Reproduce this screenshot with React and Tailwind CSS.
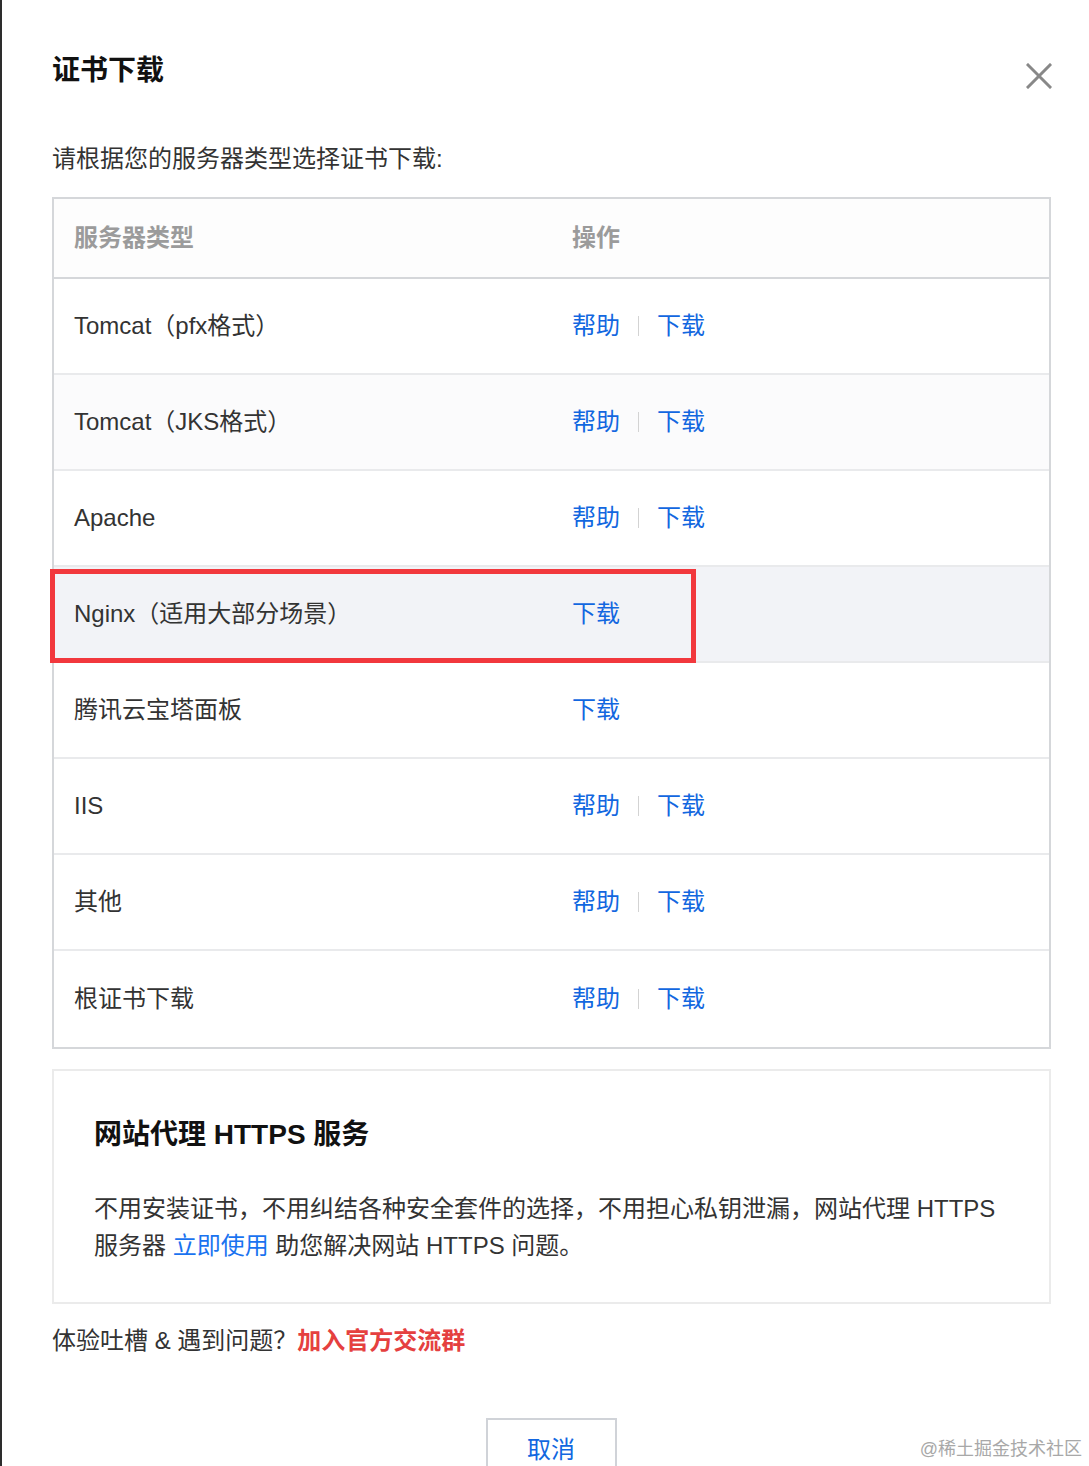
import React from "react";

const FONT = { fontFamily: '"Liberation Sans", "Noto Sans CJK SC", sans-serif' };

const rows = [
  { name: "Tomcat（pfx格式）", help: true, bg: "bg-white" },
  { name: "Tomcat（JKS格式）", help: true, bg: "bg-[#fbfbfc]" },
  { name: "Apache", help: true, bg: "bg-white" },
  { name: "Nginx（适用大部分场景）", help: false, bg: "bg-[#f2f3f7]", highlight: true },
  { name: "腾讯云宝塔面板", help: false, bg: "bg-white" },
  { name: "IIS", help: true, bg: "bg-white" },
  { name: "其他", help: true, bg: "bg-white" },
  { name: "根证书下载", help: true, bg: "bg-white" },
];

function Row({ row, last }) {
  return (
    <div
      className={`relative flex items-center h-[96px] pl-[20px] ${row.bg} ${
        last ? "" : "border-b-2 border-[#e9eaec]"
      }`}
    >
      <div className="w-[498px] text-[24px] leading-[32px] text-[#333]">{row.name}</div>
      <div className="flex items-center text-[24px] leading-[32px] text-[#1267e0]">
        {row.help ? (
          <>
            <span>帮助</span>
            <span className="mx-[18px] w-px h-[20px] bg-[#d3d3d3]" />
            <span>下载</span>
          </>
        ) : (
          <span>下载</span>
        )}
      </div>
      {row.highlight && (
        <div className="absolute left-[-4px] top-[2px] bottom-[-2px] w-[646px] border-[5px] border-[#f2383d] pointer-events-none" />
      )}
    </div>
  );
}

export default function App() {
  return (
    <div className="relative flex h-[1466px] overflow-hidden bg-white" style={FONT}>
      <div className="w-[2px] shrink-0 bg-[#2d2d2d]" />
      <div className="flex-1 pl-[50px] pr-[38px]">
        <div className="flex items-start justify-between h-[30px] mt-[56px]">
          <div className="text-[28px] leading-[30px] font-bold text-[#111]">证书下载</div>
          <svg width="26" height="26" viewBox="0 0 26 26" className="mt-[7px] mr-[-1px] shrink-0">
            <path d="M2 2 L24 24 M24 2 L2 24" stroke="#888" strokeWidth="3" strokeLinecap="square" />
          </svg>
        </div>

        <div className="mt-[57px] text-[24px] leading-[32px] text-[#333]">
          请根据您的服务器类型选择证书下载:
        </div>

        <div className="mt-[22px] border-2 border-[#d5d7da]">
          <div className="flex items-center h-[80px] pl-[20px] border-b-2 border-[#d5d7da] bg-[#fdfdfd]">
            <div className="w-[498px] text-[24px] font-bold text-[#9b9b9b]">服务器类型</div>
            <div className="text-[24px] font-bold text-[#9b9b9b]">操作</div>
          </div>
          {rows.map((r, i) => (
            <Row key={i} row={r} last={i === rows.length - 1} />
          ))}
        </div>

        <div className="mt-[20px] border-2 border-[#ebebeb] px-[40px] pt-[46px] pb-[38px]">
          <div className="text-[28px] leading-[36px] font-bold text-[#111]">网站代理 HTTPS 服务</div>
          <div className="mt-[37px] text-[24px] leading-[37px] text-[#333]">
            不用安装证书，不用纠结各种安全套件的选择，不用担心私钥泄漏，网站代理 HTTPS
            <br />
            服务器 <span className="text-[#1a73f0]">立即使用</span> 助您解决网站 HTTPS 问题。
          </div>
        </div>

        <div className="mt-[21px] text-[24px] leading-[32px] text-[#333]">
          体验吐槽 &amp; 遇到问题？<span className="font-bold text-[#e5403f]">加入官方交流群</span>
        </div>

        <div className="mt-[61px] flex justify-center">
          <div className="w-[131px] h-[64px] ml-[-1px] border-2 border-[#d0d3d8] flex items-center justify-center text-[24px] text-[#1267e0]">
            取消
          </div>
        </div>
      </div>

      <div className="absolute right-[7px] bottom-[5px] text-[18px] leading-[24px] text-[#a8a8a8]">
        @稀土掘金技术社区
      </div>
    </div>
  );
}
